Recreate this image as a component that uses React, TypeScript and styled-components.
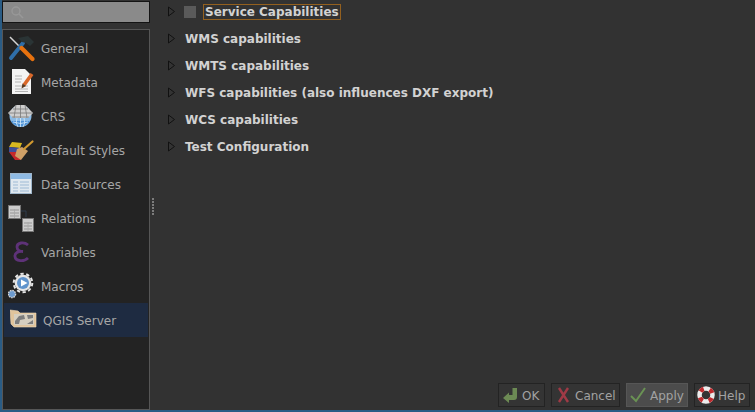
import styled, { createGlobalStyle } from "styled-components";
import type { ReactNode } from "react";

const GlobalStyle = createGlobalStyle`
  html, body {
    margin: 0;
    padding: 0;
    background: #323232;
  }
  * {
    box-sizing: border-box;
  }
`;

const Frame = styled.div`
  width: 755px;
  height: 412px;
  padding: 0 0 2px 2px;
  background: #2a5c85;
  overflow: hidden;
  font-family: "DejaVu Sans", sans-serif;
`;

const Window = styled.div`
  display: flex;
  height: 100%;
  background: #323232;
`;

const Sidebar = styled.div`
  display: flex;
  flex-direction: column;
  width: 148px;
  padding-top: 1px;
  flex-shrink: 0;
`;

const SearchBox = styled.div`
  display: flex;
  align-items: center;
  height: 22px;
  padding-left: 8px;
  background: #8a8a8a;
  border: 1px solid #141414;
  margin-bottom: 6px;
`;

const NavList = styled.div`
  flex: 1;
  padding: 1px 1px 0;
  background: #232323;
  border: 1px solid #565656;
`;

const NavRow = styled.div<{ $active?: boolean }>`
  display: flex;
  align-items: center;
  height: 34px;
  padding-left: ${(p) => (p.$active ? "6px" : "4px")};
  gap: 5px;
  background: ${(p) => (p.$active ? "#1e2b41" : "transparent")};
  color: #a6a6a6;
  font-size: 12px;
`;

const NavLabel = styled.span`
  padding-top: 2px;
`;

const NavIcon = styled.svg`
  width: 28px;
  height: 28px;
  flex-shrink: 0;
`;

const Splitter = styled.div`
  display: flex;
  flex-direction: column;
  justify-content: center;
  align-items: center;
  gap: 1px;
  width: 6px;
  flex-shrink: 0;
  padding-top: 3px;
`;

const SplitDot = styled.span`
  width: 2px;
  height: 2px;
  background: #7c7c7c;
`;

const Main = styled.div`
  flex: 1;
  display: flex;
  flex-direction: column;
  min-width: 0;
`;

const Tree = styled.div`
  flex: 1;
  padding-left: 11px;
`;

const TreeRow = styled.div`
  display: flex;
  align-items: center;
  height: 27px;
  color: #d2d2d2;
  font-size: 12px;
  font-weight: 700;
  &:first-child {
    height: 23px;
    margin-bottom: 2px;
  }
`;

const Arrow = styled.svg`
  width: 9px;
  height: 11px;
  margin-right: 9px;
  flex-shrink: 0;
`;

const Check = styled.span`
  width: 12px;
  height: 12px;
  margin: 0 7px 0 -1px;
  background: #5a5a5a;
`;

const FocusLabel = styled.span`
  padding: 0 1px;
  border: 1px solid #93601f;
  line-height: 14px;
`;

const ButtonBar = styled.div`
  display: flex;
  justify-content: flex-end;
  gap: 6px;
  padding: 0 5px 3px 0;
`;

const Button = styled.div<{ $hover?: boolean; $width: number }>`
  display: flex;
  align-items: center;
  gap: 3px;
  width: ${(p) => p.$width}px;
  height: 24px;
  padding: 0 4px;
  background: ${(p) => (p.$hover ? "#4c4c4c" : "#343434")};
  border: 1px solid ${(p) => (p.$hover ? "#565656" : "#232323")};
  color: #a2a2a2;
  font-size: 12px;
`;

const ButtonLabel = styled.span`
  padding-top: 2px;
`;

const ButtonIcon = styled.svg`
  width: 16px;
  height: 16px;
  flex-shrink: 0;
  overflow: visible;
`;

const GeneralIcon = () => (
  <NavIcon viewBox="0 0 28 28">
    <path d="M2 3 L13 14" stroke="#d4d4d4" strokeWidth="1.5" />
    <path d="M3 24 L15 9" stroke="#2f6ea8" strokeWidth="4" strokeLinecap="round" />
    <path d="M13.5 14 L24.5 25" stroke="#e8720f" strokeWidth="4.2" strokeLinecap="round" />
    <path d="M10 4 L20 2 L26 8 L22 12 L18 9 L14 8 Z" fill="#2a3435" />
  </NavIcon>
);

const MetadataIcon = () => (
  <NavIcon viewBox="0 0 28 28">
    <path d="M4 1 H17 L23 7 V26 H4 Z" fill="#f4f4f4" />
    <path d="M7 8 H14 M7 11 H14 M7 14 H13 M7 18 H20 M7 21 H20 M7 23.5 H20" stroke="#b4b4b4" strokeWidth="1" />
    <path d="M24 6 L16 17" stroke="#d9682a" strokeWidth="3.6" />
    <path d="M14.5 15.5 L13.5 20.5 L18 18 Z" fill="#5a3a20" />
  </NavIcon>
);

const CrsIcon = () => (
  <NavIcon viewBox="0 0 28 28">
    <circle cx="12.5" cy="14" r="11" fill="#8bbbe6" />
    <path d="M3 19 A11 11 0 0 0 22 19 Z" fill="#4f93d6" />
    <path d="M8 3 H17 L25 11 L20 16 H5 L0 11 Z" fill="#cfcfcf" />
    <path
      d="M12.5 3 V16 M8 3 L6 16 M17 3 L19 16 M5 7 H20 M1 11 H24 M4 15 H21"
      stroke="#7a7a7a"
      strokeWidth="0.8"
      fill="none"
    />
    <path d="M5 20 Q12.5 23 20 20 M9 16 Q7 21 10 25 M16 16 Q18 21 15 25 M12.5 16 V25" stroke="#d8ecfb" strokeWidth="0.8" fill="none" />
  </NavIcon>
);

const StylesIcon = () => (
  <NavIcon viewBox="0 0 28 28">
    <path d="M4 6 L14 7 L12 12 L1 11 Z" fill="#d9b81f" />
    <path d="M1 11 L12 12 L11 17 L1 16 Z" fill="#3f4f9a" />
    <path d="M1 16 L11 16 L13 24 L7 24 Z" fill="#c5292b" />
    <path d="M9 13 L14 11 L20 15 L13 24 L7 20 Z" fill="#cfa067" />
    <path d="M16 13 L24.5 5.5" stroke="#d29a30" strokeWidth="2.2" strokeLinecap="round" />
  </NavIcon>
);

const SourcesIcon = () => (
  <NavIcon viewBox="0 0 28 28">
    <rect x="2.5" y="3.5" width="21" height="20" fill="#e0e8ef" stroke="#9fb6cb" />
    <rect x="3" y="4" width="20" height="5" fill="#8fbae3" />
    <path d="M5 12 H10 M12 12 H21 M5 15 H10 M12 15 H21 M5 18 H10 M12 18 H21 M5 21 H10 M12 21 H21" stroke="#9dbad6" strokeWidth="1.2" />
  </NavIcon>
);

const RelationsIcon = () => (
  <NavIcon viewBox="0 0 28 28">
    <path d="M13 7 H18 V13" stroke="#2f3c4c" strokeWidth="1" fill="none" />
    <rect x="0.5" y="1.5" width="12" height="13" fill="#cdcdcd" stroke="#777777" />
    <path d="M2 6 H11 M2 9 H11 M2 12 H11" stroke="#959595" strokeWidth="1" />
    <path d="M6.5 5 V14" stroke="#a8a8a8" strokeWidth="0.8" />
    <rect x="14.5" y="14.5" width="11" height="13" fill="#cdcdcd" stroke="#777777" />
    <path d="M16 19 H24 M16 22 H24 M16 25 H24" stroke="#959595" strokeWidth="1" />
    <path d="M20 18 V27" stroke="#a8a8a8" strokeWidth="0.8" />
  </NavIcon>
);

const VariablesIcon = () => (
  <NavIcon viewBox="0 0 28 28">
    <path
      d="M20 7 C16 3.5 9 4.5 9 9 C9 12 12 13.5 15 13.5 C10 13 6.5 15 7 18.5 C7.5 23.5 16 24 20 20"
      stroke="#5e3278"
      strokeWidth="2.8"
      fill="none"
    />
  </NavIcon>
);

const MacrosIcon = () => (
  <NavIcon viewBox="0 0 28 28">
    <circle cx="15" cy="11" r="8.3" fill="#e6e6e6" />
    <circle cx="15" cy="11" r="9.3" fill="none" stroke="#e6e6e6" strokeWidth="2" strokeDasharray="3.3 2.55" />
    <circle cx="15" cy="11" r="6" fill="#5f93cc" />
    <path d="M13 7.5 L19.5 11 L13 14.5 Z" fill="#ffffff" />
    <circle cx="4" cy="22" r="3.6" fill="#6d9bcf" stroke="#d4d4d4" strokeWidth="1.4" strokeDasharray="1.6 0.8" />
  </NavIcon>
);

const ServerIcon = () => (
  <NavIcon viewBox="0 0 28 28">
    <path d="M0 4 L8 5 L10 7 H26 V21 H4 L1 18 Z" fill="#e0c49c" stroke="#eed9b6" strokeWidth="0.6" />
    <rect x="4" y="8" width="20" height="11" fill="#d6cfc0" />
    <path d="M5 15 L9 10 L14 9 L15 13 L10 14 L9 18 H5 Z M17 9 H23 V12 L18 13 Z M17 18 L23 14 V18 Z" fill="#7d7d7d" />
  </NavIcon>
);

const navItems: { label: string; icon: ReactNode; active?: boolean }[] = [
  { label: "General", icon: <GeneralIcon /> },
  { label: "Metadata", icon: <MetadataIcon /> },
  { label: "CRS", icon: <CrsIcon /> },
  { label: "Default Styles", icon: <StylesIcon /> },
  { label: "Data Sources", icon: <SourcesIcon /> },
  { label: "Relations", icon: <RelationsIcon /> },
  { label: "Variables", icon: <VariablesIcon /> },
  { label: "Macros", icon: <MacrosIcon /> },
  { label: "QGIS Server", icon: <ServerIcon />, active: true },
];

const sections = [
  "WMS capabilities",
  "WMTS capabilities",
  "WFS capabilities (also influences DXF export)",
  "WCS capabilities",
  "Test Configuration",
];

const TreeArrow = () => (
  <Arrow viewBox="0 0 9 11">
    <path d="M1.5 1 L7.5 5.5 L1.5 10 Z" fill="#333333" stroke="#111111" />
  </Arrow>
);

function App() {
  return (
    <>
      <GlobalStyle />
      <Frame>
        <Window>
          <Sidebar>
            <SearchBox>
              <svg width="13" height="13" viewBox="0 0 13 13">
                <circle cx="5" cy="5" r="4" fill="none" stroke="#989898" strokeWidth="1.4" />
                <path d="M8 8 L12 12" stroke="#989898" strokeWidth="1.6" />
              </svg>
            </SearchBox>
            <NavList>
              {navItems.map((item) => (
                <NavRow key={item.label} $active={item.active}>
                  {item.icon}
                  <NavLabel>{item.label}</NavLabel>
                </NavRow>
              ))}
            </NavList>
          </Sidebar>
          <Splitter>
            {[0, 1, 2, 3, 4, 5].map((i) => (
              <SplitDot key={i} />
            ))}
          </Splitter>
          <Main>
            <Tree>
              <TreeRow>
                <TreeArrow />
                <Check />
                <FocusLabel>Service Capabilities</FocusLabel>
              </TreeRow>
              {sections.map((s) => (
                <TreeRow key={s}>
                  <TreeArrow />
                  {s}
                </TreeRow>
              ))}
            </Tree>
            <ButtonBar>
              <Button $width={47}>
                <ButtonIcon viewBox="0 0 16 16">
                  <path
                    d="M0 11 L6 5.5 V8 H9.5 V1 H14 V10 Q14 13 11 13 H6 V16 Z"
                    fill="#6c8a54"
                  />
                </ButtonIcon>
                <ButtonLabel>OK</ButtonLabel>
              </Button>
              <Button $width={69}>
                <ButtonIcon viewBox="0 0 16 16">
                  <path d="M3 1 L12 15 M12 1 L3 15" stroke="#a03a46" strokeWidth="2.4" />
                </ButtonIcon>
                <ButtonLabel>Cancel</ButtonLabel>
              </Button>
              <Button $hover $width={62}>
                <ButtonIcon viewBox="0 0 16 16">
                  <path d="M0 9 L5 14 L14 1" stroke="#6a9254" strokeWidth="2" fill="none" />
                </ButtonIcon>
                <ButtonLabel>Apply</ButtonLabel>
              </Button>
              <Button $width={56}>
                <ButtonIcon viewBox="0 0 16 16">
                  <circle cx="7" cy="8" r="6.5" fill="none" stroke="#ececec" strokeWidth="4.5" />
                  <circle
                    cx="7"
                    cy="8"
                    r="6.5"
                    fill="none"
                    stroke="#c02a2e"
                    strokeWidth="4.5"
                    strokeDasharray="4 6.2"
                    strokeDashoffset="-3.1"
                  />
                </ButtonIcon>
                <ButtonLabel>Help</ButtonLabel>
              </Button>
            </ButtonBar>
          </Main>
        </Window>
      </Frame>
    </>
  );
}

export default App;
